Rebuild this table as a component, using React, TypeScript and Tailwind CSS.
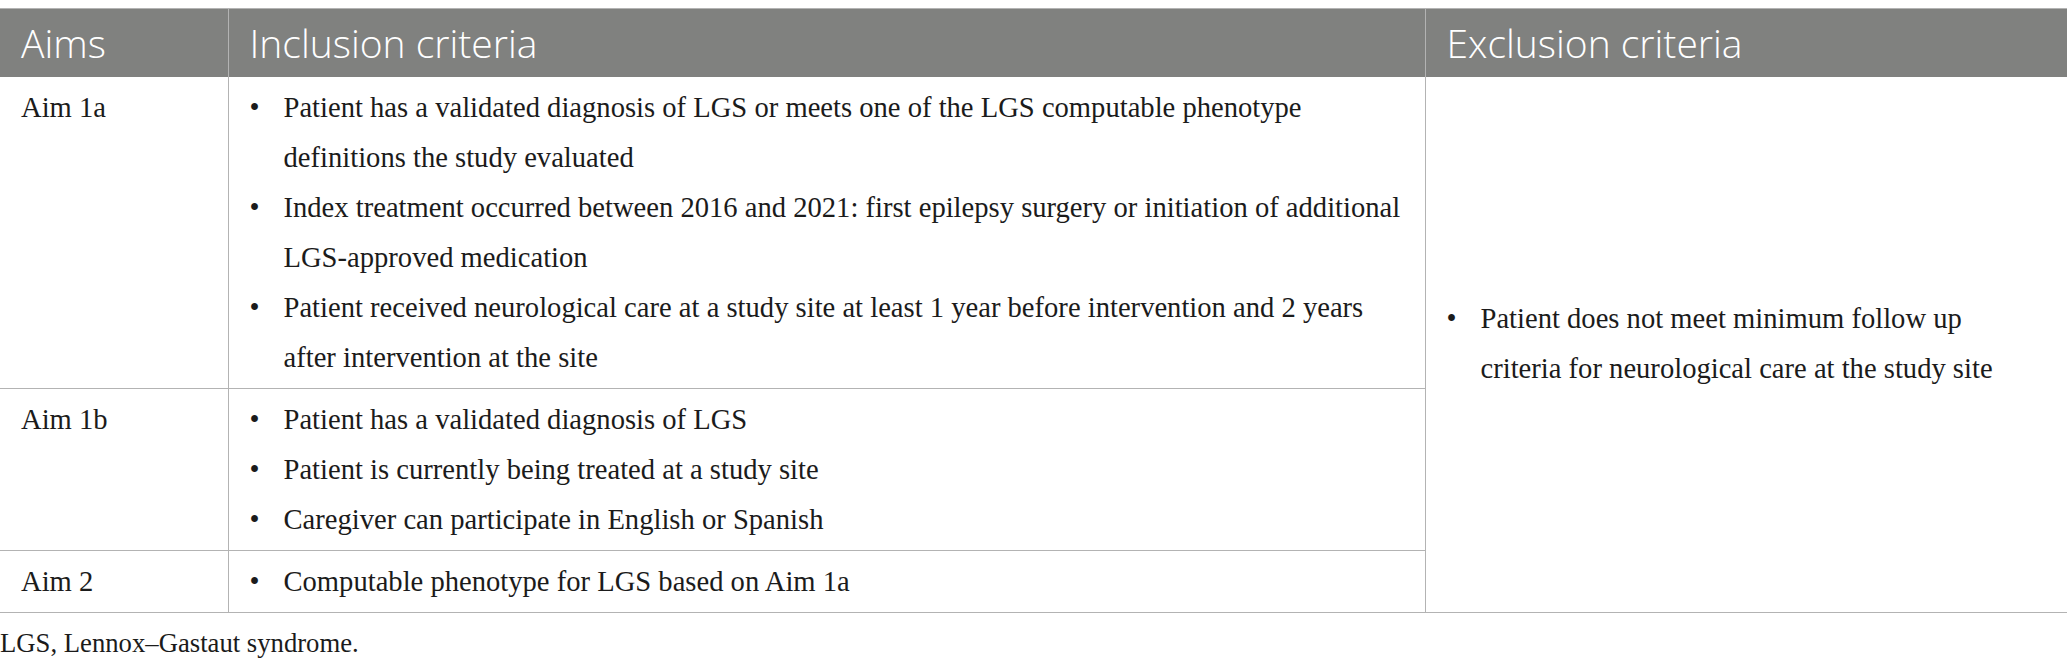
import React from 'react';

const serif = { fontFamily: '"Liberation Serif", "Times New Roman", serif' };

const Bullets: React.FC<{ items: React.ReactNode[] }> = ({ items }) => (
  <ul>
    {items.map((item, i) => (
      <li key={i} className="flex">
        <span className="w-[34px] shrink-0">•</span>
        <span>{item}</span>
      </li>
    ))}
  </ul>
);

const rows = [
  {
    aim: 'Aim 1a',
    items: [
      <>Patient has a validated diagnosis of LGS or meets one of the LGS computable phenotype<br />definitions the study evaluated</>,
      <>Index treatment occurred between 2016 and 2021: first epilepsy surgery or initiation of additional<br />LGS-approved medication</>,
      <>Patient received neurological care at a study site at least 1 year before intervention and 2 years<br />after intervention at the site</>,
    ],
  },
  {
    aim: 'Aim 1b',
    items: [
      'Patient has a validated diagnosis of LGS',
      'Patient is currently being treated at a study site',
      'Caregiver can participate in English or Spanish',
    ],
  },
  {
    aim: 'Aim 2',
    items: ['Computable phenotype for LGS based on Aim 1a'],
  },
];

export default function App() {
  return (
    <div className="w-[2067px] h-[668px] bg-white pt-[8px]">
      <table className="w-[2067px] border-collapse table-fixed text-[#1b1b1b]">
        <colgroup>
          <col className="w-[228px]" />
          <col className="w-[1197px]" />
          <col className="w-[642px]" />
        </colgroup>
        <thead>
          <tr
            className="bg-[#80817f] text-white text-[39px] font-light h-[68px]"
            style={{ fontFamily: '"Open Sans", "Noto Sans", sans-serif' }}
          >
            <th className="text-left font-light px-[21px] border-t border-r border-[#b3b3b3]">Aims</th>
            <th className="text-left font-light px-[21px] border-t border-r border-[#b3b3b3]">Inclusion criteria</th>
            <th className="text-left font-light px-[21px] border-t border-r border-[#b3b3b3]">Exclusion criteria</th>
          </tr>
        </thead>
        <tbody className="text-[28.6px] leading-[50px]" style={serif}>
          {rows.map((row, i) => (
            <tr key={row.aim}>
              <td className="align-top px-[21px] pt-[6px] pb-[5px] border-b border-r border-[#b3b3b3]">{row.aim}</td>
              <td className="align-top pl-[21px] pr-[10px] pt-[6px] pb-[5px] border-b border-r border-[#b3b3b3] whitespace-nowrap">
                <Bullets items={row.items} />
              </td>
              {i === 0 && (
                <td rowSpan={3} className="align-middle pl-[21px] pr-[10px] border-b border-r border-[#b3b3b3] whitespace-nowrap">
                  <Bullets
                    items={[<>Patient does not meet minimum follow up<br />criteria for neurological care at the study site</>]}
                  />
                </td>
              )}
            </tr>
          ))}
        </tbody>
      </table>
      <p className="text-[26.7px] leading-[40px] mt-[10px] text-[#1b1b1b]" style={serif}>
        LGS, Lennox–Gastaut syndrome.
      </p>
    </div>
  );
}
